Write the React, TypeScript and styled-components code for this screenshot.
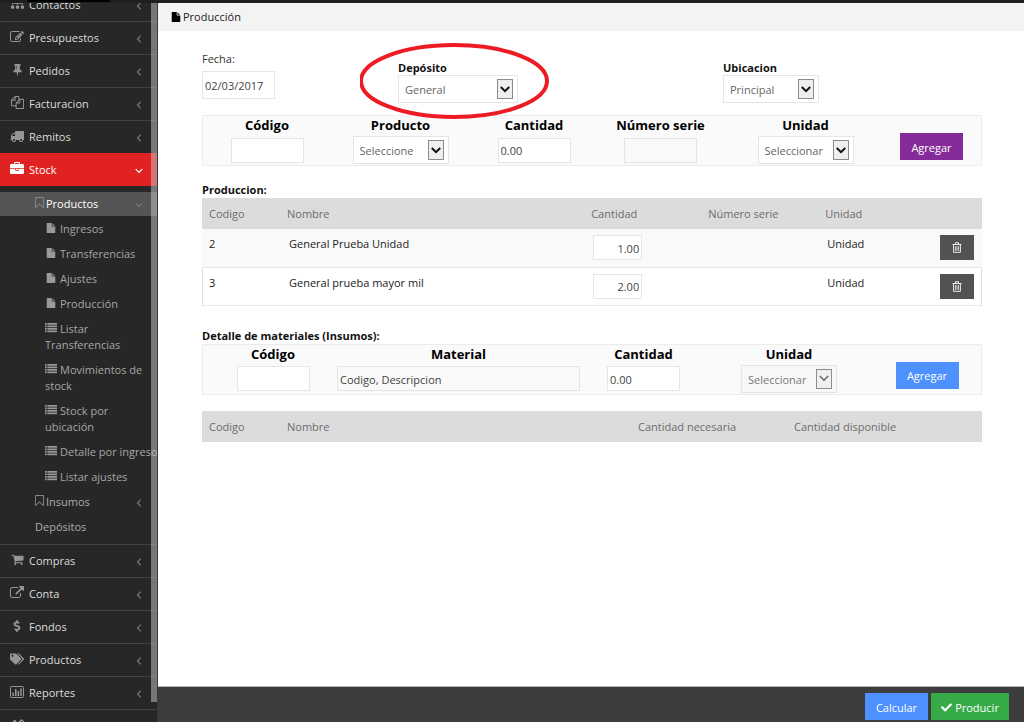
import React from 'react';
import styled, { createGlobalStyle, css } from 'styled-components';
import { FaSitemap, FaTags, FaCogs, FaCheck, FaDollarSign } from 'react-icons/fa';

const GlobalStyle = createGlobalStyle`
  *, *::before, *::after { box-sizing: border-box; }
  body { margin: 0; background: #fff; }
  body, button, input, select { font-family: "Open Sans", "Liberation Sans", sans-serif; }
`;

/* ---------- icons ---------- */

const paths = {
  edit: 'M888 1184l116-116-152-152-116 116v56h96v96h56zm440-720q-16-16-33 1l-350 350q-17 17-1 33t33-1l350-350q17-17 1-33zm80 594v190q0 119-84.5 203.5t-203.5 84.5h-832q-119 0-203.5-84.5t-84.5-203.5v-832q0-119 84.5-203.5t203.5-84.5h832q63 0 117 25 15 7 18 23 3 17-9 29l-49 49q-14 14-32 8-23-6-45-6h-832q-66 0-113 47t-47 113v832q0 66 47 113t113 47h832q66 0 113-47t47-113v-126q0-13 9-22l64-64q15-15 35-7t20 29zm-96-738l288 288-672 672h-288v-288zm444 132l-92 92-288-288 92-92q28-28 68-28t68 28l152 152q28 28 28 68t-28 68z',
  tack: 'M800 864v-448q0-14-9-23t-23-9-23 9-9 23v448q0 14 9 23t23 9 23-9 9-23zm672 352q0 26-19 45t-45 19h-429l-51 483q-2 12-10.5 20.5t-20.5 8.5h-1q-27 0-32-27l-76-485h-404q-26 0-45-19t-19-45q0-123 78.5-221.5t177.5-98.5v-512q-52 0-90-38t-38-90 38-90 90-38h640q52 0 90 38t38 90-38 90-90 38v512q99 0 177.5 98.5t78.5 221.5z',
  copy: 'M1696 384q40 0 68 28t28 68v1216q0 40-28 68t-68 28h-960q-40 0-68-28t-28-68v-288h-544q-40 0-68-28t-28-68v-672q0-40 20-88t48-76l408-408q28-28 76-48t88-20h416q40 0 68 28t28 68v328q68-40 128-40h416zm-544 213l-299 299h299v-299zm-640-384l-299 299h299v-299zm196 647l316-316v-416h-384v416q0 40-28 68t-68 28h-416v640h512v-256q0-40 20-88t48-76zm956 804v-1152h-384v416q0 40-28 68t-68 28h-416v640h896z',
  truck: 'M640 1408q0-52-38-90t-90-38-90 38-38 90 38 90 90 38 90-38 38-90zm-384-512h384v-256h-158q-13 0-22 9l-195 195q-9 9-9 22v30zm1280 512q0-52-38-90t-90-38-90 38-38 90 38 90 90 38 90-38 38-90zm256-1088v1024q0 15-4 26.5t-13.5 18.5-16.5 11.5-23.5 6-22.5 2-25.5 0-22.5-.5q0 106-75 181t-181 75-181-75-75-181h-384q0 106-75 181t-181 75-181-75-75-181h-64q-3 0-22.5.5t-25.5 0-22.5-2-23.5-6-16.5-11.5-13.5-18.5-4-26.5q0-26 19-45t45-19v-320q0-8-.5-35t0-38 2.5-34.5 6.5-37 14-30.5 22.5-30l198-198q19-19 50.5-32t58.5-13h160v-192q0-26 19-45t45-19h1024q26 0 45 19t19 45z',
  briefcase: 'M640 256h512v-128h-512v128zm1152 640v480q0 66-47 113t-113 47h-1472q-66 0-113-47t-47-113v-480h672v160q0 26 19 45t45 19h320q26 0 45-19t19-45v-160h672zm-768 0v128h-256v-128h256zm768-480v384h-1792v-384q0-66 47-113t113-47h352v-160q0-40 28-68t68-28h576q40 0 68 28t28 68v160h352q66 0 113 47t47 113z',
  bookmark: 'M1408 256h-1024v1242l423-406 89-85 89 85 423 406v-1242zm12-128q23 0 44 9 33 13 52.5 41t19.5 62v1289q0 34-19.5 62t-52.5 41q-19 8-44 8-48 0-83-32l-441-424-441 424q-36 33-83 33-23 0-44-9-33-13-52.5-41t-19.5-62v-1289q0-34 19.5-62t52.5-41q21-9 44-9h1048z',
  file: 'M1152 512v-472q22 14 36 28l408 408q14 14 28 36h-472zm-128 32q0 40 28 68t68 28h544v1056q0 40-28 68t-68 28h-1344q-40 0-68-28t-28-68v-1600q0-40 28-68t68-28h800v544z',
  cart: 'M704 1536q0 52-38 90t-90 38-90-38-38-90 38-90 90-38 90 38 38 90zm896 0q0 52-38 90t-90 38-90-38-38-90 38-90 90-38 90 38 38 90zm128-1088v512q0 24-16.5 42.5t-40.5 21.5l-1044 122q13 60 13 70 0 16-24 64h920q26 0 45 19t19 45-19 45-45 19h-1024q-26 0-45-19t-19-45q0-11 8-31.5t16-36 21.5-40 15.5-29.5l-177-823h-204q-26 0-45-19t-19-45 19-45 45-19h256q16 0 28.5 6.5t19.5 15.5 13 24.5 8 26 5.5 29.5 4.5 26h1201q26 0 45 19t19 45z',
  external: 'M1408 928v320q0 119-84.5 203.5t-203.5 84.5h-832q-119 0-203.5-84.5t-84.5-203.5v-832q0-119 84.5-203.5t203.5-84.5h704q14 0 23 9t9 23v64q0 14-9 23t-23 9h-704q-66 0-113 47t-47 113v832q0 66 47 113t113 47h832q66 0 113-47t47-113v-320q0-14 9-23t23-9h64q14 0 23 9t9 23zm384-864v512q0 26-19 45t-45 19-45-19l-176-176-652 652q-10 10-23 10t-23-10l-114-114q-10-10-10-23t10-23l652-652-176-176q-19-19-19-45t19-45 45-19h512q26 0 45 19t19 45z',
};

const Glyph = ({ name, size = 14 }: { name: keyof typeof paths; size?: number }) => (
  <svg width={size} height={size} viewBox="0 0 1792 1792" fill="currentColor" aria-hidden="true">
    <path d={paths[name]} />
  </svg>
);

const BookmarkIcon = () => (
  <svg width="9" height="11" viewBox="256 128 1280 1536" fill="currentColor" aria-hidden="true">
    <path d={paths.bookmark} />
  </svg>
);

const ListIcon = () => (
  <svg width="12" height="10" viewBox="0 0 12 10" fill="currentColor" aria-hidden="true">
    {[0, 2.5, 5, 7.5].map((y) => (
      <g key={y}>
        <rect x="0" y={y} width="1.7" height="1.7" />
        <rect x="2.4" y={y} width="9.6" height="1.7" />
      </g>
    ))}
  </svg>
);

const ChartIcon = () => (
  <svg width="14" height="12" viewBox="0 0 14 12" fill="currentColor" aria-hidden="true">
    <rect x="0.5" y="0.5" width="13" height="11" rx="1" fill="none" stroke="currentColor" />
    <rect x="2.4" y="6.5" width="1.5" height="3.5" />
    <rect x="5" y="3" width="1.5" height="7" />
    <rect x="7.6" y="5" width="1.5" height="5" />
    <rect x="10.2" y="2.4" width="1.5" height="7.6" />
  </svg>
);

const TrashIcon = () => (
  <svg width="10" height="11" viewBox="0 0 10 11" fill="none" stroke="currentColor" aria-hidden="true">
    <path d="M0.5 2.5h9M3.5 2V0.7h3V2M1.6 3v7.3h6.8V3" />
    <path d="M3.5 4.2v4.6M5 4.2v4.6M6.5 4.2v4.6" strokeWidth="0.8" />
  </svg>
);

const AngleIcon = ({ open }: { open?: boolean }) => (
  <svg width="8" height="8" viewBox="0 0 8 8" fill="none" stroke="currentColor" strokeWidth="1.2" aria-hidden="true">
    <path d={open ? 'M0.7 2.2L4 5.5 7.3 2.2' : 'M5.8 0.7L2.5 4 5.8 7.3'} />
  </svg>
);

/* ---------- shell ---------- */

const Shell = styled.div`
  display: flex;
  flex-direction: column;
  height: 100vh;
  overflow: hidden;
`;

const TopStrip = styled.div`
  flex: none;
  height: 3px;
  padding-left: 27px;
  background: #1f1f1f;
`;

const TopStripTab = styled.div`
  width: 83px;
  height: 2px;
  background: #000;
`;

const Body = styled.div`
  flex: 1;
  min-height: 0;
  display: flex;
`;

const Sidebar = styled.nav`
  position: relative;
  flex: none;
  width: 158px;
  overflow: hidden;
  background: #272727;
  border-right: 1px solid #3a3a3a;
`;

const ScrollThumb = styled.div`
  position: absolute;
  top: 0;
  right: 0;
  bottom: 20px;
  width: 6px;
  background: rgba(200, 200, 200, 0.5);
`;

const Menu = styled.ul`
  list-style: none;
  margin: -15px 0 0;
  padding: 0;
`;

const MenuLink = styled.a<{ $active?: boolean }>`
  display: flex;
  align-items: center;
  height: 33px;
  padding: 0 14px 0 10px;
  border-top: 1px solid #424242;
  color: #dcdcdc;
  font-size: 11px;
  line-height: 16px;
  text-decoration: none;
  ${(p) => p.$active && css`
    background: #e02222;
    border-top-color: #e02222;
    color: #fff;
  `}
`;

const MenuIcon = styled.span<{ $active?: boolean }>`
  display: flex;
  justify-content: center;
  width: 14px;
  margin-right: 5px;
  padding-bottom: 3px;
  color: ${(p) => (p.$active ? '#fff' : '#969696')};
`;

const Angle = styled.span<{ $bright?: boolean }>`
  display: flex;
  margin-left: auto;
  padding-top: 2px;
  color: ${(p) => (p.$bright ? '#fff' : '#777')};
`;

const SubMenu = styled.ul`
  list-style: none;
  margin: 0;
  padding: 6px 0 5px;
`;

const SubLink = styled.a<{ $open?: boolean }>`
  display: flex;
  align-items: center;
  height: ${(p) => (p.$open ? 24 : 25)}px;
  padding: 0 14px 0 35px;
  background: ${(p) => (p.$open ? '#545454' : 'none')};
  color: ${(p) => (p.$open ? '#fff' : '#acacac')};
  font-size: 11px;
  line-height: 16px;
  text-decoration: none;
`;

const SubIcon = styled.span`
  display: flex;
  width: 11px;
  padding-bottom: 3px;
  color: #8a8a8a;
`;

const Leaves = styled.ul`
  list-style: none;
  margin: 0;
  padding: 0;
`;

const LeafLink = styled.a<{ $nowrap?: boolean }>`
  display: block;
  padding: 5px 4px 4px 45px;
  color: #a6a6a6;
  font-size: 11px;
  line-height: 16px;
  text-decoration: none;
  white-space: ${(p) => (p.$nowrap ? 'nowrap' : 'normal')};
`;

const LeafIcon = styled.span`
  display: inline-flex;
  justify-content: center;
  width: 12px;
  margin-right: 3px;
  color: #9a9a9a;
`;

const Main = styled.div`
  flex: 1;
  min-width: 0;
  display: flex;
  flex-direction: column;
`;

const Breadcrumb = styled.div`
  display: flex;
  align-items: center;
  gap: 2px;
  height: 28px;
  padding-left: 13px;
  background: #f3f3f3;
  color: #222;
  font-size: 11px;
  line-height: 16px;
  svg { color: #000; }
`;

const Content = styled.main`
  flex: 1;
  min-height: 0;
  padding: 20px 42px 0 44px;
`;

const Footer = styled.footer`
  display: flex;
  justify-content: flex-end;
  gap: 3px;
  height: 36px;
  padding: 6px 15px 0 0;
  border-top: 1px solid #b5b5b5;
  background: #3d3d3d;
`;

/* ---------- form parts ---------- */

const Button = styled.button<{ $color: string; $wide?: boolean }>`
  display: inline-flex;
  align-items: center;
  justify-content: center;
  gap: 3px;
  width: ${(p) => (p.$wide ? 78 : 63)}px;
  height: 27px;
  padding: 2px 0 0;
  border: 0;
  background: ${(p) => p.$color};
  color: #fff;
  font-size: 11px;
  line-height: 16px;
`;

const TextBox = styled.input<{ $w?: string; $tall?: boolean; $right?: boolean }>`
  width: ${(p) => p.$w ?? '73px'};
  max-width: 100%;
  height: ${(p) => (p.$tall ? 28 : 25)}px;
  padding: 1px 2px 0;
  border: 1px solid #e5e5e5;
  border-radius: 0;
  background: #fff;
  color: #444;
  font-size: 11px;
  text-align: ${(p) => (p.$right ? 'right' : 'left')};
  &:disabled, &:read-only { background: #f9f9f9; }
`;

const SelectBox = styled.span<{ $w: number }>`
  position: relative;
  display: inline-block;
  width: ${(p) => p.$w}px;
  height: 28px;
`;

const NativeSelect = styled.select`
  appearance: none;
  width: 100%;
  height: 28px;
  padding: 1px 22px 0 6px;
  border: 1px solid #e5e5e5;
  border-radius: 0;
  background: #fff;
  color: #666;
  font-size: 11px;
  opacity: 1;
  &:disabled { background: #f7f7f7; color: #777; }
`;

const ArrowBox = styled.span<{ $muted?: boolean }>`
  position: absolute;
  top: 4px;
  right: 5px;
  display: flex;
  align-items: center;
  justify-content: center;
  width: 16px;
  height: 20px;
  border: 1px solid #8c8c8c;
  background: #efefef;
  color: ${(p) => (p.$muted ? '#666' : '#111')};
  pointer-events: none;
`;

type SelectProps = { id: string; value: string; width?: number; disabled?: boolean };

const Select = ({ id, value, width = 96, disabled }: SelectProps) => (
  <SelectBox $w={width}>
    <NativeSelect id={id} disabled={disabled} defaultValue={value}>
      <option>{value}</option>
    </NativeSelect>
    <ArrowBox $muted={disabled}>
      <svg width="10" height="7" viewBox="0 0 10 7" fill="none" stroke="currentColor" strokeWidth={disabled ? 1.4 : 2}>
        <path d="M0.8 1L5 5.2 9.2 1" />
      </svg>
    </ArrowBox>
  </SelectBox>
);

const FieldRow = styled.div`
  display: grid;
  grid-template-columns: 196fr 325fr 259fr;
  height: 64px;
`;

const Field = styled.div`
  position: relative;
  display: flex;
  flex-direction: column;
  align-items: flex-start;
`;

const LowField = styled(Field)`
  padding-top: 10px;
`;

const PlainLabel = styled.label`
  color: #333;
  font-size: 11px;
  line-height: 16px;
  padding-bottom: 4px;
`;

const BoldLabel = styled.label`
  color: #111;
  font-size: 11px;
  font-weight: 700;
  line-height: 14px;
`;

const Highlight = styled.svg`
  position: absolute;
  top: -11px;
  left: -38px;
  pointer-events: none;
`;

const Panel = styled.section<{ $cols: string; $pad: string }>`
  display: grid;
  grid-template-columns: ${(p) => p.$cols};
  height: 51px;
  padding: ${(p) => p.$pad};
  background: #fafafa;
  box-shadow: inset 0 0 0 1px #ececec;
`;

const Cell = styled.div`
  display: flex;
  flex-direction: column;
  align-items: center;
  min-width: 0;
`;

const CellLabel = styled.label`
  color: #000;
  font-size: 13px;
  font-weight: 700;
  line-height: 21px;
  white-space: nowrap;
`;

const CellControl = styled.div`
  display: flex;
  align-items: center;
  justify-content: center;
  width: 100%;
  height: 28px;
`;

const ActionCell = styled(Cell)`
  padding-top: 18px;
`;

const SectionTitle = styled.h2<{ $gap: number }>`
  margin: ${(p) => p.$gap}px 0 0;
  color: #111;
  font-size: 11px;
  font-weight: 700;
  line-height: 16px;
`;

const Table = styled.table<{ $gap?: number }>`
  width: 100%;
  margin-top: ${(p) => p.$gap ?? 0}px;
  table-layout: fixed;
  border-collapse: collapse;
  box-shadow: inset 0 0 0 1px #e2e2e2;
`;

const HeadCell = styled.th<{ $w?: string }>`
  width: ${(p) => p.$w ?? 'auto'};
  height: 31px;
  padding: 1px 7px 0;
  background: #dcdcdc;
  color: #6c6c6c;
  font-size: 11px;
  font-weight: 400;
  line-height: 16px;
  text-align: left;
  white-space: nowrap;
`;

const Row = styled.tr<{ $odd?: boolean }>`
  background: ${(p) => (p.$odd ? '#f9f9f9' : 'transparent')};
  border-bottom: 1px solid #e6e6e6;
`;

const DataCell = styled.td<{ $inset?: boolean; $end?: boolean }>`
  height: 38px;
  padding: 6px ${(p) => (p.$end ? 8 : 0)}px 0 ${(p) => (p.$inset ? 9 : 7)}px;
  color: #222;
  font-size: 11px;
  line-height: 18px;
  text-align: ${(p) => (p.$end ? 'right' : 'left')};
  vertical-align: top;
`;

const DeleteButton = styled.button`
  display: inline-flex;
  align-items: center;
  justify-content: center;
  width: 34px;
  height: 25px;
  padding: 0;
  border: 0;
  background: #525252;
  color: #e8eee8;
`;

/* ---------- data ---------- */

const before = [
  { text: 'Contactos', icon: <FaSitemap size={13} /> },
  { text: 'Presupuestos', icon: <Glyph name="edit" /> },
  { text: 'Pedidos', icon: <Glyph name="tack" size={13} /> },
  { text: 'Facturacion', icon: <Glyph name="copy" size={13} /> },
  { text: 'Remitos', icon: <Glyph name="truck" /> },
];

const after = [
  { text: 'Compras', icon: <Glyph name="cart" size={13} /> },
  { text: 'Conta', icon: <Glyph name="external" size={14} /> },
  { text: 'Fondos', icon: <FaDollarSign size={12} /> },
  { text: 'Productos', icon: <FaTags size={14} /> },
  { text: 'Reportes', icon: <ChartIcon /> },
  { text: 'Configuración', icon: <FaCogs size={14} /> },
];

const leaves = [
  { text: 'Ingresos', file: true },
  { text: 'Transferencias', file: true },
  { text: 'Ajustes', file: true },
  { text: 'Producción', file: true },
  { text: 'Listar Transferencias' },
  { text: 'Movimientos de stock' },
  { text: 'Stock por ubicación' },
  { text: 'Detalle por ingreso', nowrap: true },
  { text: 'Listar ajustes' },
];

const products = [
  { code: '2', name: 'General Prueba Unidad', qty: '1.00', unit: 'Unidad' },
  { code: '3', name: 'General prueba mayor mil', qty: '2.00', unit: 'Unidad' },
];

const MenuItem = ({ text, icon }: { text: string; icon: React.ReactNode }) => (
  <li>
    <MenuLink href="#">
      <MenuIcon>{icon}</MenuIcon>
      {text}
      <Angle><AngleIcon /></Angle>
    </MenuLink>
  </li>
);

export default function App() {
  return (
    <Shell>
      <GlobalStyle />
      <TopStrip><TopStripTab /></TopStrip>
      <Body>
        <Sidebar>
          <Menu>
            {before.map((m) => <MenuItem key={m.text} {...m} />)}
            <li>
              <MenuLink href="#" $active>
                <MenuIcon $active><Glyph name="briefcase" /></MenuIcon>
                Stock
                <Angle $bright><AngleIcon open /></Angle>
              </MenuLink>
              <SubMenu>
                <li>
                  <SubLink href="#" $open>
                    <SubIcon><BookmarkIcon /></SubIcon>
                    Productos
                    <Angle><AngleIcon open /></Angle>
                  </SubLink>
                  <Leaves>
                    {leaves.map((l) => (
                      <li key={l.text}>
                        <LeafLink href="#" $nowrap={l.nowrap}>
                          <LeafIcon>{l.file ? <Glyph name="file" size={10} /> : <ListIcon />}</LeafIcon>
                          {l.text}
                        </LeafLink>
                      </li>
                    ))}
                  </Leaves>
                </li>
                <li>
                  <SubLink href="#">
                    <SubIcon><BookmarkIcon /></SubIcon>
                    Insumos
                    <Angle><AngleIcon /></Angle>
                  </SubLink>
                </li>
                <li><SubLink href="#">Depósitos</SubLink></li>
              </SubMenu>
            </li>
            {after.map((m) => <MenuItem key={m.text} {...m} />)}
          </Menu>
          <ScrollThumb />
        </Sidebar>

        <Main>
          <Breadcrumb><Glyph name="file" size={10} />Producción</Breadcrumb>
          <Content>
            <FieldRow>
              <Field>
                <PlainLabel htmlFor="fecha">Fecha:</PlainLabel>
                <TextBox id="fecha" $tall defaultValue="02/03/2017" />
              </Field>
              <LowField>
                <BoldLabel htmlFor="deposito">Depósito</BoldLabel>
                <Select id="deposito" value="General" width={120} />
                <Highlight width="192" height="80" viewBox="0 0 192 80" fill="none" aria-hidden="true">
                  <ellipse cx="94" cy="41" rx="93" ry="36" stroke="#ed1c24" strokeWidth="4" />
                </Highlight>
              </LowField>
              <LowField>
                <BoldLabel htmlFor="ubicacion">Ubicacion</BoldLabel>
                <Select id="ubicacion" value="Principal" />
              </LowField>
            </FieldRow>

            <Panel $cols="130fr 137fr 130fr 123fr 167fr 85fr" $pad="0 8px 0 0">
              <Cell>
                <CellLabel htmlFor="p-codigo">Código</CellLabel>
                <CellControl><TextBox id="p-codigo" /></CellControl>
              </Cell>
              <Cell>
                <CellLabel htmlFor="p-producto">Producto</CellLabel>
                <CellControl><Select id="p-producto" value="Seleccione" /></CellControl>
              </Cell>
              <Cell>
                <CellLabel htmlFor="p-cantidad">Cantidad</CellLabel>
                <CellControl><TextBox id="p-cantidad" defaultValue="0.00" /></CellControl>
              </Cell>
              <Cell>
                <CellLabel htmlFor="p-serie">Número serie</CellLabel>
                <CellControl><TextBox id="p-serie" disabled /></CellControl>
              </Cell>
              <Cell>
                <CellLabel htmlFor="p-unidad">Unidad</CellLabel>
                <CellControl><Select id="p-unidad" value="Seleccionar" /></CellControl>
              </Cell>
              <ActionCell><Button type="button" $color="#852b99">Agregar</Button></ActionCell>
            </Panel>

            <SectionTitle $gap={16}>Produccion:</SectionTitle>
            <Table>
              <thead>
                <tr>
                  <HeadCell $w="10%">Codigo</HeadCell>
                  <HeadCell $w="39%">Nombre</HeadCell>
                  <HeadCell $w="15%">Cantidad</HeadCell>
                  <HeadCell $w="15%">Número serie</HeadCell>
                  <HeadCell $w="13%">Unidad</HeadCell>
                  <HeadCell />
                </tr>
              </thead>
              <tbody>
                {products.map((p, i) => (
                  <Row key={p.code} $odd={i % 2 === 0}>
                    <DataCell>{p.code}</DataCell>
                    <DataCell $inset>{p.name}</DataCell>
                    <DataCell $inset>
                      <TextBox $w="49px" $right aria-label={`Cantidad ${p.name}`} defaultValue={p.qty} />
                    </DataCell>
                    <DataCell />
                    <DataCell $inset>{p.unit}</DataCell>
                    <DataCell $end>
                      <DeleteButton type="button" aria-label={`Eliminar ${p.name}`}><TrashIcon /></DeleteButton>
                    </DataCell>
                  </Row>
                ))}
              </tbody>
            </Table>

            <SectionTitle $gap={22}>Detalle de materiales (Insumos):</SectionTitle>
            <Panel $cols="118fr 253fr 117fr 174fr 102fr" $pad="0 4px 0 12px">
              <Cell>
                <CellLabel htmlFor="m-codigo">Código</CellLabel>
                <CellControl><TextBox id="m-codigo" /></CellControl>
              </Cell>
              <Cell>
                <CellLabel htmlFor="m-material">Material</CellLabel>
                <CellControl><TextBox id="m-material" $w="96%" readOnly defaultValue="Codigo, Descripcion" /></CellControl>
              </Cell>
              <Cell>
                <CellLabel htmlFor="m-cantidad">Cantidad</CellLabel>
                <CellControl><TextBox id="m-cantidad" defaultValue="0.00" /></CellControl>
              </Cell>
              <Cell>
                <CellLabel htmlFor="m-unidad">Unidad</CellLabel>
                <CellControl><Select id="m-unidad" value="Seleccionar" disabled /></CellControl>
              </Cell>
              <ActionCell><Button type="button" $color="#4d90fe">Agregar</Button></ActionCell>
            </Panel>

            <Table $gap={16}>
              <thead>
                <tr>
                  <HeadCell $w="10%">Codigo</HeadCell>
                  <HeadCell $w="45%">Nombre</HeadCell>
                  <HeadCell $w="20%">Cantidad necesaria</HeadCell>
                  <HeadCell>Cantidad disponible</HeadCell>
                </tr>
              </thead>
            </Table>
          </Content>
          <Footer>
            <Button type="button" $color="#4d90fe">Calcular</Button>
            <Button type="button" $color="#35aa47" $wide><FaCheck size={11} />Producir</Button>
          </Footer>
        </Main>
      </Body>
    </Shell>
  );
}
